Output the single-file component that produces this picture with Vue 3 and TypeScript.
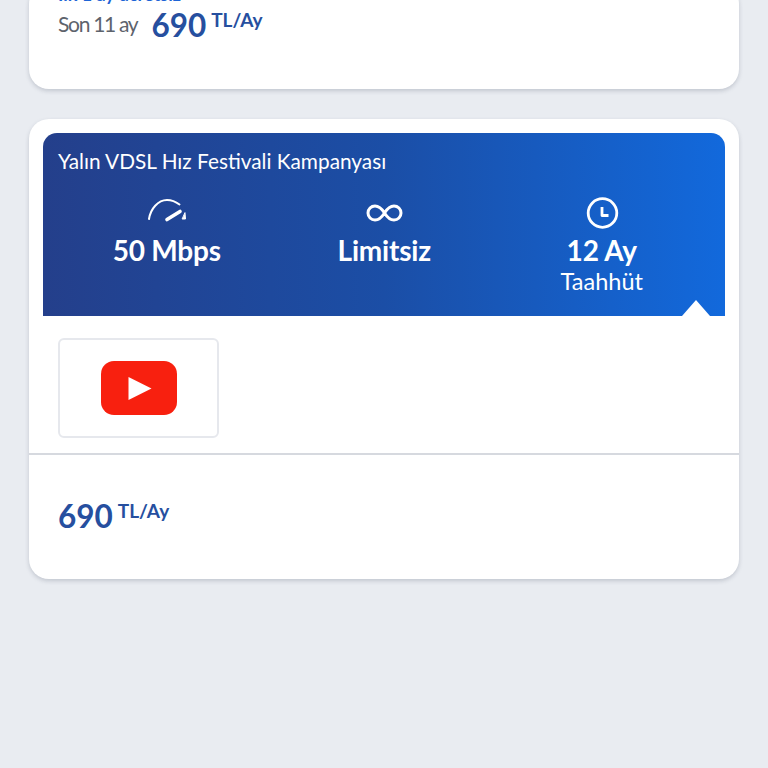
<script setup lang="ts">
const specs = [
  { id: 'speed', value: '50 Mbps', note: '' },
  { id: 'quota', value: 'Limitsiz', note: '' },
  { id: 'term', value: '12 Ay', note: 'Taahhüt' },
]
</script>

<template>
  <div class="page">
    <section class="card first">
      <div class="promo">İlk 1 ay ücretsiz</div>
      <div class="price-row">
        <span class="after">Son 11 ay</span>
        <span class="price">690</span>
        <span class="unit">TL/Ay</span>
      </div>
    </section>

    <section class="card second">
      <header class="banner">
        <h2 class="title">Yalın VDSL Hız Festivali Kampanyası</h2>
        <div class="specs">
          <div v-for="spec in specs" :key="spec.id" class="spec">
            <svg v-if="spec.id === 'speed'" class="icon" width="40" height="32" viewBox="0 0 40 32" fill="none" stroke="#fff" stroke-linecap="round">
              <path d="M2 22C3.500 12 11 3 20 3c4.500 0 8.500 1.500 12.500 4.500" stroke-width="2" />
              <path d="M20 22.500L33 14.500" stroke-width="3.600" />
              <path d="M38 16l.5 6h-3z" fill="#fff" stroke-width="1" stroke-linejoin="round" />
            </svg>
            <svg v-else-if="spec.id === 'quota'" class="icon" width="40" height="32" viewBox="0 0 40 32" fill="none" stroke="#fff" stroke-width="3">
              <path d="M20.500 16C18 12 15.500 9 11 9a7 7 0 0 0 0 14c4.500 0 7-3 9.500-7s5-7 9.500-7a7 7 0 0 1 0 14c-4.500 0-7-3-9.500-7z" />
            </svg>
            <svg v-else class="icon" width="40" height="32" viewBox="0 0 40 32" fill="none" stroke="#fff">
              <circle cx="20.500" cy="16" r="14.300" stroke-width="2.800" />
              <path d="M20 10V18.500H26.500" stroke-width="2.800" stroke-linejoin="round" />
            </svg>
            <div class="value">{{ spec.value }}</div>
            <div v-if="spec.note" class="note">{{ spec.note }}</div>
          </div>
        </div>
        <span class="arrow"></span>
      </header>

      <div class="apps">
        <div class="app">
          <svg width="76" height="54" viewBox="0 0 76 54">
            <rect width="76" height="54" rx="13" fill="#f8200f" />
            <path d="M27.500 16L50.500 27.500L27.500 39z" fill="#fff" />
          </svg>
        </div>
      </div>

      <div class="total">
        <span class="price">690</span>
        <span class="unit">TL/Ay</span>
      </div>
    </section>
  </div>
</template>

<style>
html,
body {
  margin: 0;
  height: 768px;
  overflow: hidden;
  background: #e9ecf1;
}
</style>

<style scoped>
.page {
  display: flex;
  flex-direction: column;
  gap: 30px;
  padding: 0 29px;
  font-family: Lato, 'Open Sans', sans-serif;
}

.card {
  background: #fff;
  border-radius: 20px;
  box-shadow: 0 2px 4px rgba(60, 70, 90, 0.22);
}

.first {
  height: 105px;
  margin-top: -16px;
  padding: 0 29px;
  box-sizing: border-box;
}

.promo {
  height: 20px;
  font-size: 18px;
  font-weight: 700;
  line-height: 20px;
  color: #1d64d6;
}

.price-row {
  display: flex;
  align-items: flex-start;
  height: 40px;
  margin-top: 2px;
}

.after {
  margin: 5px 14px 0 0;
  font-size: 21px;
  letter-spacing: -1.3px;
  line-height: 26px;
  color: #5d636c;
}

.price {
  font-size: 31.500px;
  font-weight: 700;
  line-height: 36px;
  margin-top: 1px;
  color: #264f9f;
}

.unit {
  margin: 3px 0 0 5px;
  font-size: 19px;
  font-weight: 700;
  line-height: 22px;
  color: #264f9f;
}

.second {
  height: 460px;
  padding: 14px 14px 0;
  box-sizing: border-box;
}

.banner {
  position: relative;
  height: 183px;
  padding: 17px 15px 0;
  box-sizing: border-box;
  border-radius: 14px 14px 0 0;
  background: linear-gradient(90deg, #243f8b 0%, #1b4ea6 50%, #1269dc 100%);
  color: #fff;
}

.title {
  margin: -1px 0 1px;
  font-size: 20.800px;
  font-weight: 400;
  line-height: 24px;
}

.specs {
  display: grid;
  grid-template-columns: repeat(3, 217.500px);
  margin-top: 24px;
}

.spec {
  display: flex;
  flex-direction: column;
  align-items: center;
}

.icon {
  display: block;
}

.value {
  font-size: 28px;
  font-weight: 700;
  letter-spacing: -0.2px;
  line-height: 34px;
  margin-top: 4px;
}

.note {
  font-size: 23.500px;
  line-height: 28px;
}

.arrow {
  position: absolute;
  right: 15px;
  bottom: 0;
  width: 0;
  height: 0;
  border-left: 14px solid transparent;
  border-right: 14px solid transparent;
  border-bottom: 16px solid #fff;
}

.apps {
  height: 139px;
  padding: 22px 29px 0;
  box-sizing: border-box;
  margin: 0 -14px;
  border-bottom: 2px solid #d6d9df;
}

.app {
  display: flex;
  align-items: center;
  justify-content: center;
  width: 161px;
  height: 100px;
  box-sizing: border-box;
  border: 2px solid #e6e8ed;
  border-radius: 6px;
}

.total {
  display: flex;
  align-items: flex-start;
  padding: 42px 15px 0;
}
</style>
